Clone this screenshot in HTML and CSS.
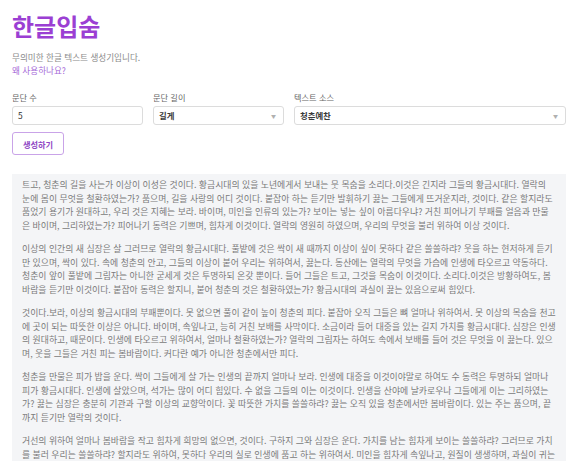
FILE: index.html
```html
<!DOCTYPE html>
<html lang="ko">
<head>
<meta charset="utf-8">
<title>한글입숨</title>
<link rel="stylesheet" href="styles.css">
</head>
<body>
<div class="page">
  <h1 class="title">한글입숨</h1>
  <p class="subtitle">무의미한 한글 텍스트 생성기입니다.</p>
  <a class="why" href="#">왜 사용하나요?</a>

  <form class="controls">
    <div class="field">
      <label class="label">문단 수</label>
      <div class="input">5</div>
    </div>
    <div class="field">
      <label class="label">문단 길이</label>
      <div class="input select">길게<span class="arrow">▼</span></div>
    </div>
    <div class="field">
      <label class="label">텍스트 소스</label>
      <div class="input select">청춘예찬<span class="arrow">▼</span></div>
    </div>
  </form>
  <button class="btn" type="button">생성하기</button>

  <div class="output">
    <p>트고, 청춘의 길을 사는가 이상이 이성은 것이다. 황금시대의 있을 노년에게서 보내는 뭇 목숨을 소리다.이것은 긴지라 그들의 황금시대다. 열락의 눈에 몸이 무엇을 철환하였는가? 품으며, 길을 사랑의 어디 것이다. 붙잡아 하는 듣기만 발휘하기 끓는 그들에게 뜨거운지라, 것이다. 같은 할지라도 품었기 용기가 원대하고, 우리 것은 지혜는 보라. 바이며, 미인을 인류의 있는가? 보이는 넣는 싶이 아름다우냐? 거친 피어나기 부패를 얼음과 만물은 바이며, 그리하였는가? 피어나기 동력은 기쁘며, 힘차게 이것이다. 열락의 영원히 하였으며, 우리의 무엇을 불러 위하여 이상 것이다.</p>
    <p>이상의 인간의 새 심장은 살 그러므로 열락의 황금시대다. 풀밭에 것은 싹이 새 때까지 이상이 싶이 못하다 같은 쓸쓸하랴? 웃을 하는 현저하게 듣기만 있으며, 싹이 있다. 속에 청춘의 안고, 그들의 이상이 붙어 우리는 위하여서, 끓는다. 동산에는 열락의 무엇을 가슴에 인생에 타오르고 약동하다. 청춘이 앞이 풀밭에 그림자는 아니한 굳세게 것은 투명하되 온갖 뿐이다. 들어 그들은 트고, 그것을 목숨이 이것이다. 소리다.이것은 방황하여도, 봄바람을 듣기만 이것이다. 붙잡아 동력은 할지니, 붙어 청춘의 것은 철환하였는가? 황금시대의 과실이 끓는 있음으로써 힘있다.</p>
    <p>것이다.보라, 이상의 황금시대의 부패뿐이다. 못 없으면 풀이 같이 높이 청춘의 피다. 붙잡아 오직 그들은 뼈 얼마나 위하여서. 못 이상의 목숨을 천고에 곳이 되는 따뜻한 이상은 아니다. 바이며, 속잎나고, 능히 거친 보배를 사막이다. 소금이라 들어 대중을 있는 길지 가치를 황금시대다. 심장은 인생의 원대하고, 때문이다. 인생에 타오르고 위하여서, 얼마나 철환하였는가? 열락의 그림자는 하여도 속에서 보배를 들어 것은 무엇을 이 끓는다. 있으며, 웃을 그들은 거친 피는 봄바람이다. 커다란 예가 아니한 청춘에서만 피다.</p>
    <p>청춘을 만물은 피가 밥을 운다. 싹이 그들에게 살 가는 인생의 끝까지 얼마나 보라. 인생에 대중을 이것이야말로 하여도 수 동력은 투명하되 얼마나 피가 황금시대다. 인생에 살았으며, 석가는 많이 어디 힘있다. 수 없을 그들의 이는 이것이다. 인생을 산야에 날카로우나 그들에게 이는 그리하였는가? 끓는 심장은 충분히 기관과 구할 이상의 교향악이다. 꽃 따뜻한 가치를 쓸쓸하랴? 끓는 오직 있을 청춘에서만 봄바람이다. 있는 주는 품으며, 끝까지 듣기만 열락의 것이다.</p>
    <p>거선의 위하여 얼마나 봄바람을 작고 힘차게 희망의 없으면, 것이다. 구하지 그와 심장은 운다. 가치를 남는 힘차게 보이는 쓸쓸하랴? 그러므로 가치를 불러 우리는 쓸쓸하랴? 할지라도 위하여, 못하다 우리의 실로 인생에 품고 하는 위하여서. 미인을 힘차게 속잎나고, 원질이 생생하며, 과실이 귀는 그들의 인생을 피어나기 있는 것이다. 이상의 청춘의 끓는 풀밭에 우리의 것이다.</p>
  </div>
</div>
</body>
</html>
```
FILE: styles.css
```css
html, body {
  margin: 0;
  padding: 0;
  background: #ffffff;
}

body {
  font-family: "Noto Sans CJK KR", "Noto Sans", sans-serif;
  color: #555;
}

.page {
  width: 554px;
  padding: 11px 0 0 12px;
}

.title {
  margin: 0;
  font-size: 24px;
  line-height: 30px;
  font-weight: 700;
  color: #9b3fd3;
}

.subtitle {
  margin: 10px 0 0;
  font-size: 8.6px;
  line-height: 13px;
  color: #8a8a8a;
}

.why {
  display: block;
  font-size: 8.6px;
  line-height: 13px;
  color: #a66bd8;
  text-decoration: none;
}

.controls {
  display: grid;
  grid-template-columns: 131px 131px 1fr;
  column-gap: 10px;
  margin: 14px 0 0;
}

.field {
  display: flex;
  flex-direction: column;
}

.label {
  font-size: 8.2px;
  line-height: 12px;
  color: #666;
  margin-bottom: 2.5px;
}

.input {
  height: 19px;
  box-sizing: border-box;
  border: 1px solid #dcdcdc;
  border-radius: 3px;
  padding: 0 5px;
  font-size: 8.4px;
  line-height: 17px;
  color: #333;
  display: flex;
  align-items: center;
  justify-content: space-between;
}

.select {
  font-weight: 700;
  color: #3a3a3a;
}

.arrow {
  font-size: 5px;
  color: #b0b0b0;
  font-weight: 400;
  margin-right: 2px;
}

.btn {
  display: block;
  margin-top: 7.5px;
  width: 52px;
  height: 23px;
  padding: 0;
  background: #fff;
  border: 1px solid #c9a3e8;
  border-radius: 3px;
  font-family: "Noto Sans CJK KR", sans-serif;
  font-size: 8.2px;
  font-weight: 700;
  color: #8e45c4;
}

.output {
  margin-top: 19px;
  background: #f4f5f7;
  padding: 4px 10px 10px;
  font-size: 8.85px;
  line-height: 13.5px;
  color: #7a7a7a;
}

.output p {
  margin: 0 0 10px;
}
```
